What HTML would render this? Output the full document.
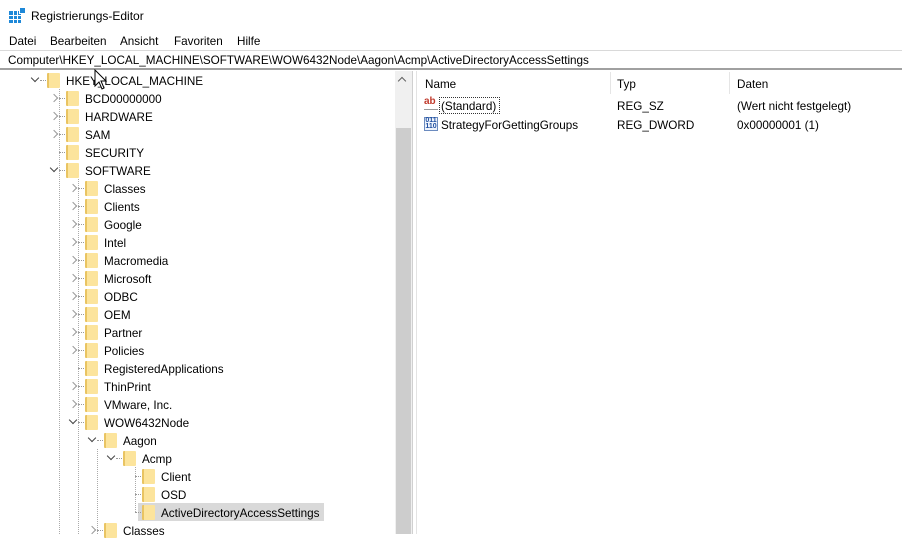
<!DOCTYPE html>
<html><head><meta charset="utf-8"><style>
*{margin:0;padding:0;box-sizing:border-box}
body{width:902px;height:534px;overflow:hidden;background:#fff;font-family:"Liberation Sans",sans-serif;font-size:11.7px;color:#000;position:relative}
.a{position:absolute;white-space:nowrap}
.f{position:absolute;width:13px;height:15px;background:#fce49c;border-left:2px solid #e9c462;border-radius:1px}
.c{position:absolute;width:6px;height:6px;border-right:1.3px solid #777;border-bottom:1.3px solid #777}
.d{position:absolute;height:0;border-top:1px dotted #999;width:6px}
</style></head><body>
<svg class="a" style="left:9px;top:7px" width="17" height="17"><rect x="0" y="4" width="12" height="12" fill="#1e88d8"/><g stroke="#fff" stroke-width="1"><line x1="0" y1="8.5" x2="12" y2="8.5"/><line x1="0" y1="12.5" x2="12" y2="12.5"/><line x1="4.5" y1="4" x2="4.5" y2="16"/><line x1="8.5" y1="4" x2="8.5" y2="16"/></g><rect x="10.5" y="0.5" width="6" height="6" fill="#1e88d8" stroke="#fff"/></svg>
<div class="a" style="left:31px;top:9px;font-size:12px">Registrierungs-Editor</div>
<div class="a" style="left:9px;top:35px">Datei</div>
<div class="a" style="left:50px;top:35px">Bearbeiten</div>
<div class="a" style="left:120px;top:35px">Ansicht</div>
<div class="a" style="left:174px;top:35px">Favoriten</div>
<div class="a" style="left:237px;top:35px">Hilfe</div>
<div class="a" style="left:0;top:50px;width:902px;height:20px;border-top:1px solid #d9d9d9;border-bottom:2px solid #a0a0a0"></div>
<div class="a" style="left:8px;top:54px">Computer\HKEY_LOCAL_MACHINE\SOFTWARE\WOW6432Node\Aagon\Acmp\ActiveDirectoryAccessSettings</div>
<div class="a" style="left:395px;top:71px;width:17px;height:463px;background:#f0f0f0"></div>
<div class="a" style="left:396px;top:128px;width:15px;height:406px;background:#cdcdcd"></div>
<div class="a" style="left:399px;top:78px;width:6px;height:6px;border-left:1.3px solid #606060;border-top:1.3px solid #606060;transform:rotate(45deg)"></div>
<div class="a" style="left:412px;top:71px;width:1px;height:463px;background:#d0d0d0"></div>
<div class="a" style="left:416px;top:71px;width:1px;height:463px;background:#e3e3e3"></div>
<div class="a" style="left:138px;top:503px;width:186px;height:18px;background:#d9d9d9"></div>
<div class="a" style="left:59px;top:89px;height:445px;border-left:1px dotted #aaa"></div>
<div class="a" style="left:78px;top:179px;height:355px;border-left:1px dotted #aaa"></div>
<div class="a" style="left:97px;top:449px;height:85px;border-left:1px dotted #aaa"></div>
<div class="a" style="left:135px;top:467px;height:45px;border-left:1px dotted #aaa"></div>
<div id="t"></div>
<div class="a" style="left:425px;top:78px">Name</div>
<div class="a" style="left:617px;top:78px">Typ</div>
<div class="a" style="left:737px;top:78px">Daten</div>
<div class="a" style="left:610px;top:72px;width:1px;height:22px;background:#e5e5e5"></div>
<div class="a" style="left:729px;top:72px;width:1px;height:22px;background:#e5e5e5"></div>
<div class="a" style="left:424px;top:97px;width:14px;height:14px;font-size:10px;font-weight:bold;color:#c0392b;line-height:10px">ab<div style="height:3px;border-bottom:1px solid #999;width:14px"></div></div>
<div class="a" style="left:439px;top:97px;width:61px;height:17px;border:1px dotted #333"></div>
<div class="a" style="left:441px;top:100px">(Standard)</div>
<div class="a" style="left:617px;top:100px">REG_SZ</div>
<div class="a" style="left:737px;top:100px">(Wert nicht festgelegt)</div>
<div class="a" style="left:424px;top:117px;width:14px;height:14px;border:1px solid #6b8bbf;font-size:7px;font-weight:bold;color:#1f4fa0;line-height:6px;text-align:center;background:#eef3fb">011<br>110</div>
<div class="a" style="left:441px;top:119px">StrategyForGettingGroups</div>
<div class="a" style="left:617px;top:119px">REG_DWORD</div>
<div class="a" style="left:737px;top:119px">0x00000001 (1)</div>
<svg class="a" style="left:94px;top:69px" width="14" height="22"><path d="M1 1 L1 17 L5 13 L8 20 L10 19 L7 12 L12 12 Z" fill="#fff" stroke="#000" stroke-width="1"/></svg>
<script>
var r=[[0,'HKEY_LOCAL_MACHINE','o'],[1,'BCD00000000','c'],[1,'HARDWARE','c'],[1,'SAM','c'],[1,'SECURITY',''],[1,'SOFTWARE','o'],
[2,'Classes','c'],[2,'Clients','c'],[2,'Google','c'],[2,'Intel','c'],[2,'Macromedia','c'],[2,'Microsoft','c'],[2,'ODBC','c'],[2,'OEM','c'],[2,'Partner','c'],[2,'Policies','c'],[2,'RegisteredApplications',''],[2,'ThinPrint','c'],[2,'VMware, Inc.','c'],[2,'WOW6432Node','o'],
[3,'Aagon','o'],[4,'Acmp','o'],[5,'Client',''],[5,'OSD',''],[5,'ActiveDirectoryAccessSettings',''],[3,'Classes','c']];
var h='';
r.forEach(function(e,i){var y=71+18*i,l=e[0],fx=47+19*l,tx=66+19*l,cx=32+19*l;
h+='<div class="d" style="left:'+(fx-7)+'px;top:'+(y+9)+'px"></div>';
h+='<div class="f" style="left:'+fx+'px;top:'+(y+2)+'px"></div>';
h+='<div class="a" style="left:'+tx+'px;top:'+(y+4)+'px">'+e[1]+'</div>';
if(e[2]=='c')h+='<div class="c" style="left:'+(cx)+'px;top:'+(y+6)+'px;transform:rotate(-45deg);border-color:#999"></div>';
if(e[2]=='o')h+='<div class="c" style="left:'+(cx)+'px;top:'+(y+4)+'px;transform:rotate(45deg);border-color:#444"></div>';
});
document.getElementById('t').innerHTML=h;
</script>
</body></html>
